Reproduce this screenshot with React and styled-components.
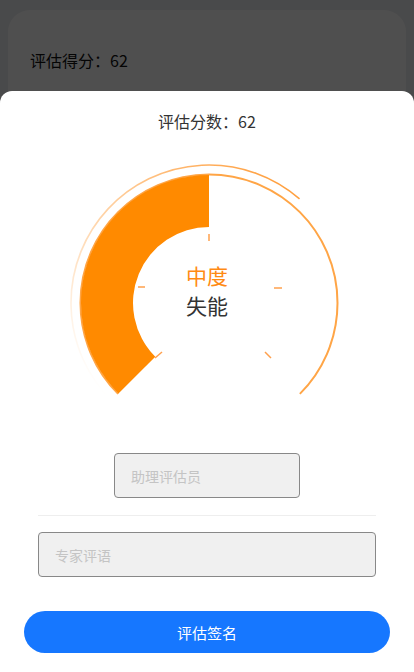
import React from 'react';
import styled, { createGlobalStyle } from 'styled-components';

const GlobalStyle = createGlobalStyle`
  html, body {
    margin: 0;
    padding: 0;
    background: #ecedf1;
    font-family: "Noto Sans CJK SC", "Noto Sans", sans-serif;
  }
  * { box-sizing: border-box; }
`;

const Page = styled.div`
  width: 414px;
  height: 672px;
  padding: 10px 8px 0;
  overflow: hidden;
`;

const ScoreCard = styled.div`
  background: #fff;
  border-radius: 22px;
  height: 200px;
  padding: 38px 22px 0;
`;

const CardText = styled.div`
  font-size: 16px;
  line-height: 24px;
  color: #111;
`;

const Mask = styled.div`
  position: fixed;
  inset: 0;
  background: rgba(0, 0, 0, 0.69);
`;

const Sheet = styled.div`
  position: fixed;
  left: 0;
  right: 0;
  bottom: 0;
  height: 581px;
  background: #fff;
  border-radius: 12px 12px 0 0;
  padding-top: 18px;
  display: flex;
  flex-direction: column;
  align-items: center;
`;

const SheetTitle = styled.div`
  font-size: 16px;
  line-height: 24px;
  color: #333;
`;

const GaugeBox = styled.div`
  position: relative;
  margin-top: 12px;
  width: 300px;
  height: 260px;
`;

const GaugeLabel = styled.div`
  position: absolute;
  left: 0;
  right: 0;
  top: 115px;
  text-align: center;
  font-size: 21px;
  line-height: 30px;
`;

const LabelLine = styled.div`
  color: ${({ accent }) => (accent ? '#ff8a14' : '#333')};
`;

const Field = styled.div`
  width: ${({ wide }) => (wide ? '338px' : '186px')};
  height: 45px;
  margin-top: ${({ gap }) => gap}px;
  background: #f0f0f0;
  border: 1px solid #888;
  border-radius: 4px;
  padding-left: 16px;
  display: flex;
  align-items: center;
  font-size: 14px;
  color: #c4c4c4;
`;

const Divider = styled.div`
  width: 338px;
  height: 1px;
  margin-top: 17px;
  background: #eeeeee;
`;

const SignButton = styled.button`
  margin-top: 34px;
  width: 366px;
  height: 42px;
  border: none;
  border-radius: 21px;
  background: #1677ff;
  color: #fff;
  font-family: inherit;
  font-size: 15px;
`;

// gauge centre in svg coords (page 209,303 minus svg origin 57,145)
const CX = 152;
const CY = 158;
const pt = (deg, r) => {
  const a = (deg * Math.PI) / 180;
  return [CX + r * Math.sin(a), CY - r * Math.cos(a)];
};
const arc = (from, to, r) => {
  const [x1, y1] = pt(from, r);
  const [x2, y2] = pt(to, r);
  const large = to - from > 180 ? 1 : 0;
  return `M${x1} ${y1} A${r} ${r} 0 ${large} 1 ${x2} ${y2}`;
};
const sector = (from, to, R, r) => {
  const [a1, b1] = pt(from, R);
  const [a2, b2] = pt(to, R);
  const [c2, d2] = pt(to, r);
  const [c1, d1] = pt(from, r);
  const large = to - from > 180 ? 1 : 0;
  return `M${a1} ${b1} A${R} ${R} 0 ${large} 1 ${a2} ${b2} L${c2} ${d2} A${r} ${r} 0 ${large} 0 ${c1} ${d1} Z`;
};

// tick marks, page coords
const ticks = [
  [209, 234, 209, 241],
  [138, 287, 145, 287],
  [274, 288, 282, 288],
  [155, 358, 162, 352],
  [265, 352, 271, 358],
];

const Gauge = () => {
  const [gx1, gy1] = pt(-135, 138);
  const [gx2, gy2] = pt(41, 138);
  return (
    <svg width="300" height="260" viewBox="0 0 300 260">
      <defs>
        <linearGradient id="halo" gradientUnits="userSpaceOnUse" x1={gx1} y1={gy1} x2={gx2} y2={gy2}>
          <stop offset="0" stopColor="#ffb060" stopOpacity="0" />
          <stop offset="0.45" stopColor="#ffb870" stopOpacity="0.6" />
          <stop offset="1" stopColor="#ffa040" stopOpacity="1" />
        </linearGradient>
      </defs>
      <path d={arc(-135, 41, 138)} fill="none" stroke="url(#halo)" strokeWidth="1.6" />
      <path d={arc(-135, 135, 128.5)} fill="none" stroke="#ffa546" strokeWidth="2" />
      <path d={sector(-135, 0, 128, 76)} fill="#ff8a00" />
      {ticks.map(([x1, y1, x2, y2], i) => (
        <line
          key={i}
          x1={x1 - 57}
          y1={y1 - 145}
          x2={x2 - 57}
          y2={y2 - 145}
          stroke="#ffa04d"
          strokeWidth="1.5"
        />
      ))}
    </svg>
  );
};

const App = () => (
  <>
    <GlobalStyle />
    <Page>
      <ScoreCard>
        <CardText>评估得分：62</CardText>
      </ScoreCard>
    </Page>
    <Mask />
    <Sheet>
      <SheetTitle>评估分数：62</SheetTitle>
      <GaugeBox>
        <Gauge />
        <GaugeLabel>
          <LabelLine accent>中度</LabelLine>
          <LabelLine>失能</LabelLine>
        </GaugeLabel>
      </GaugeBox>
      <Field gap={48}>助理评估员</Field>
      <Divider />
      <Field wide gap={16}>专家评语</Field>
      <SignButton>评估签名</SignButton>
    </Sheet>
  </>
);

export default App;
